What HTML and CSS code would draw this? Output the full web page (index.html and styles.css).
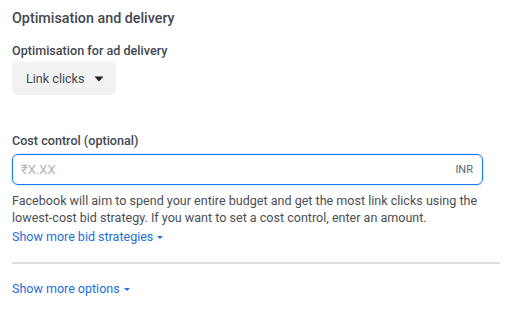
FILE: index.html
```html
<!DOCTYPE html>
<html lang="en">
<head>
<meta charset="utf-8">
<title>Optimisation and delivery</title>
<link rel="stylesheet" href="styles.css">
</head>
<body>
<section class="panel">
  <h2 class="title">Optimisation and delivery</h2>

  <div class="field">
    <div class="label">Optimisation for ad delivery</div>
    <button class="select" type="button">
      <span>Link clicks</span>
      <svg class="caret" width="10" height="6" viewBox="0 0 10 6" aria-hidden="true"><path d="M0.5 0.5h9l-4.5 5z" fill="#1c1e21"/></svg>
    </button>
  </div>

  <div class="field cost">
    <label class="label" for="cost">Cost control (optional)</label>
    <div class="input-box">
      <input id="cost" class="input" type="text" placeholder="₹X.XX">
      <span class="currency">INR</span>
    </div>
    <p class="help">Facebook will aim to spend your entire budget and get the most link clicks using the lowest-cost bid strategy. If you want to set a cost control, enter an amount.</p>
    <a class="link" href="#">Show more bid strategies<span class="tri"></span></a>
  </div>

  <hr class="divider">

  <a class="link more" href="#">Show more options<span class="tri"></span></a>
</section>
</body>
</html>
```

FILE: styles.css
```css
* { box-sizing: border-box; }
html, body { margin: 0; padding: 0; background: #fff; }
body {
  font-family: Roboto, "Liberation Sans", Arial, sans-serif;
  color: #444950;
  width: 513px;
  height: 320px;
  overflow: hidden;
}
.panel {
  padding: 9px 13px 0 12px;
  display: flex;
  flex-direction: column;
}
.title {
  margin: 0;
  font-size: 14.3px;
  line-height: 18px;
  font-weight: 500;
  color: #444950;
}
.field {
  display: flex;
  flex-direction: column;
  align-items: flex-start;
  margin-top: 16px;
}
.label {
  font-size: 12.6px;
  line-height: 16px;
  font-weight: 500;
  color: #444950;
}
.select {
  margin-top: 3px;
  height: 33px;
  padding: 0 12px 0 14px;
  border: none;
  border-radius: 6px;
  background: #f2f2f2;
  display: flex;
  align-items: center;
  gap: 9px;
  white-space: nowrap;
  font-family: inherit;
  font-size: 12.6px;
  color: #444950;
}
.caret { display: block; }
.cost { margin-top: 38px; align-items: stretch; }
.cost .label { align-self: flex-start; }
.input-box {
  margin-top: 5px;
  width: 471px;
  height: 31px;
  border: 1px solid #1877f2;
  border-radius: 6px;
  box-shadow: 0 0 0 1px rgba(24, 119, 242, 0.12);
  display: flex;
  align-items: center;
  padding: 0 9px 0 8px;
}
.input {
  flex: 1;
  border: none;
  outline: none;
  padding: 0;
  font-family: inherit;
  font-size: 13px;
  color: #1c1e21;
  background: transparent;
}
.input::placeholder { color: #b0b3b8; }
.currency {
  font-size: 11px;
  color: #606770;
}
.help {
  margin: 7px 0 0;
  font-size: 12.55px;
  line-height: 17px;
  color: #4b4f56;
}
.link {
  font-size: 12.5px;
  line-height: 17px;
  color: #216fdb;
  text-decoration: none;
  display: inline-flex;
  align-items: center;
  align-self: flex-start;
  margin-top: 2px;
}
.tri {
  display: inline-block;
  width: 0;
  height: 0;
  margin-left: 4px;
  margin-top: 2px;
  border-left: 3px solid transparent;
  border-right: 3px solid transparent;
  border-top: 3px solid #216fdb;
}
.divider {
  margin: 17px 0 0;
  width: 488px;
  border: none;
  height: 2px;
  background: #dadde1;
}
.more { margin-top: 16px; }
```
